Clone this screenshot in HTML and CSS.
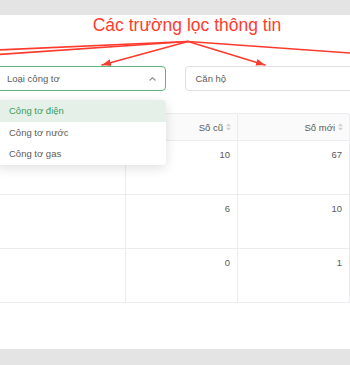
FILE: index.html
```html
<!DOCTYPE html>
<html lang="vi">
<head>
<meta charset="utf-8">
<title>Bộ lọc công tơ</title>
<link rel="stylesheet" href="styles.css">
</head>
<body>
<div class="stage">
  <div class="panel">
    <h1 class="title">Các trường lọc thông tin</h1>
    <div class="filters">
      <div class="field"></div>
      <div class="field"></div>
      <div class="field field-open">
        <span class="value">Loại công tơ</span>
        <svg class="chev" width="7" height="4" viewBox="0 0 7 4"><polyline points="0.6,3.5 3.5,0.7 6.4,3.5" fill="none" stroke="#8a8a8a" stroke-width="1.1"/></svg>
        <ul class="menu">
          <li class="item item-active">Công tơ điện</li>
          <li class="item">Công tơ nước</li>
          <li class="item">Công tơ gas</li>
        </ul>
      </div>
      <div class="field"><span class="value">Căn hộ</span></div>
      <div class="field"></div>
    </div>
    <div class="table">
      <div class="row row-head">
        <div class="cell"></div>
        <div class="cell cell-num">Số cũ<svg class="sort" width="5" height="8" viewBox="0 0 5 8"><polygon points="0,3.3 2.5,0.5 5,3.3" fill="#cfcfcf"/><polygon points="0,4.7 2.5,7.5 5,4.7" fill="#cfcfcf"/></svg></div>
        <div class="cell cell-num">Số mới<svg class="sort" width="5" height="8" viewBox="0 0 5 8"><polygon points="0,3.3 2.5,0.5 5,3.3" fill="#cfcfcf"/><polygon points="0,4.7 2.5,7.5 5,4.7" fill="#cfcfcf"/></svg></div>
      </div>
      <div class="row">
        <div class="cell"></div>
        <div class="cell cell-num">10</div>
        <div class="cell cell-num">67</div>
      </div>
      <div class="row">
        <div class="cell"></div>
        <div class="cell cell-num">6</div>
        <div class="cell cell-num">10</div>
      </div>
      <div class="row">
        <div class="cell"></div>
        <div class="cell cell-num">0</div>
        <div class="cell cell-num">1</div>
      </div>
    </div>
  </div>
  <svg class="annot" width="350" height="365" viewBox="0 0 350 365">
    <defs>
      <marker id="head" markerUnits="userSpaceOnUse" markerWidth="10" markerHeight="8" refX="9" refY="4" orient="auto">
        <polygon points="0,0.6 9,4 0,7.4" fill="#ff3b2e"/>
      </marker>
    </defs>
    <g stroke="#ff3b2e" stroke-width="1.6" fill="none" stroke-linecap="round">
      <line x1="188" y1="41.5" x2="-2" y2="50"/>
      <line x1="188" y1="41.5" x2="-2" y2="54.5"/>
      <line x1="188" y1="41.5" x2="352" y2="53.2"/>
      <line x1="188" y1="41.5" x2="102" y2="65" marker-end="url(#head)"/>
      <line x1="188" y1="41.5" x2="265" y2="65" marker-end="url(#head)"/>
    </g>
  </svg>
</div>
</body>
</html>
```

FILE: styles.css
```css
* {
  box-sizing: border-box;
}

html,
body {
  margin: 0;
  padding: 0;
}

body {
  width: 350px;
  height: 365px;
  overflow: hidden;
  background: #e4e4e4;
  font-family: "Liberation Sans", Arial, sans-serif;
  color: #5a5a5a;
}

.stage {
  position: relative;
  width: 350px;
  height: 365px;
  overflow: hidden;
  padding-top: 15px;
}

.panel {
  width: 1155px;
  height: 334px;
  margin-left: -400px;
  padding-left: 19px;
  background: #ffffff;
}

.title {
  margin: 0;
  font-weight: normal;
  font-size: 17.5px;
  line-height: 20px;
  color: #ff3b2e;
  text-align: center;
}

.filters {
  display: flex;
  gap: 19px;
  margin-top: 31px;
}

.field {
  position: relative;
  flex: 0 0 169.5px;
  height: 25px;
  border: 1px solid #dedee3;
  border-radius: 4px;
  display: flex;
  align-items: center;
  padding: 0 10px;
  font-size: 9.5px;
  color: #5c5c5c;
}

.field-open {
  border-color: #5cb67d;
}

.value {
  margin-right: auto;
  white-space: nowrap;
}

.chev {
  display: block;
  margin-right: -1px;
}

.menu {
  position: absolute;
  top: 33px;
  left: -1px;
  right: -1px;
  margin: 0;
  padding: 0;
  list-style: none;
  background: #ffffff;
  border-radius: 4px;
  box-shadow: 0 3px 12px rgba(0, 0, 0, 0.13);
  overflow: hidden;
  z-index: 2;
}

.item {
  height: 21.7px;
  line-height: 21.7px;
  padding: 0 13px;
  font-size: 9.5px;
  color: #5c5c5c;
  white-space: nowrap;
}

.item-active {
  background: #e4f0e8;
  color: #3f9c60;
}

.table {
  display: grid;
  width: 730px;
  margin-top: 22px;
  border-top: 1px solid #ececf0;
  border-left: 1px solid #ececf0;
}

.row {
  display: grid;
  grid-template-columns: 506px 112px 112px;
  height: 54px;
  border-bottom: 1px solid #ececf0;
}

.row-head {
  height: 27px;
  background: #fafafa;
}

.cell {
  border-right: 1px solid #ececf0;
  font-size: 9.5px;
  line-height: 13px;
  color: #5a5a5a;
}

.cell-num {
  text-align: right;
  padding: 7px 7px 0 0;
}

.row-head .cell-num {
  display: flex;
  align-items: center;
  justify-content: flex-end;
  gap: 3px;
  padding: 0 6px 0 0;
}

.sort {
  display: block;
}

.annot {
  position: absolute;
  top: 0;
  left: 0;
  pointer-events: none;
  z-index: 5;
}
```
